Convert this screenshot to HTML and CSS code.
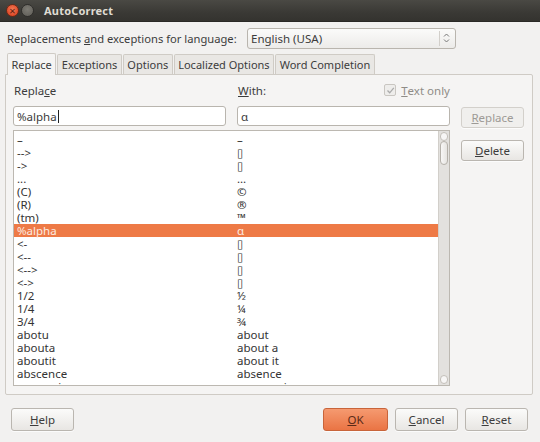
FILE: index.html
```html
<!DOCTYPE html>
<html lang="en">
<head>
  <meta charset="UTF-8">
  <title>AutoCorrect</title>
  <link rel="stylesheet" href="styles.css">
</head>
<body>
  <div class="titlebar">
    <span class="wbtn close">×</span>
    <span class="wbtn mini"></span>
    <span class="title">AutoCorrect</span>
  </div>

  <div class="dialog">
    <div class="lang-row">
      <span class="lang-label">Replacements <u>a</u>nd exceptions for language:</span>
      <div class="select">
        <span>English (USA)</span>
        <span class="spin">
          <svg width="7" height="12" viewBox="0 0 7 12"><path d="M1 4.5 L3.5 2 L6 4.5" fill="none" stroke="#777" stroke-width="1"/><path d="M1 7.5 L3.5 10 L6 7.5" fill="none" stroke="#777" stroke-width="1"/></svg>
        </span>
      </div>
    </div>

    <div class="tabs">
      <div class="tab active">Replace</div>
      <div class="tab">Exceptions</div>
      <div class="tab">Options</div>
      <div class="tab">Localized Options</div>
      <div class="tab">Word Completion</div>
    </div>

    <div class="panel">
      <div class="grid">
        <div class="head">Repla<u>c</u>e</div>
        <div class="head with"><span><u>W</u>ith:</span>
          <span class="check">
            <span class="box"><svg width="9" height="9" viewBox="0 0 9 9"><path d="M1.5 4.5 L3.7 6.8 L7.8 1.8" fill="none" stroke="#aaa" stroke-width="1.3"/></svg></span>
            <u>T</u>ext only
          </span>
        </div>
        <div></div>

        <div class="input">%alpha<span class="caret"></span></div>
        <div class="input">α</div>
        <div class="btn disabled"><u>R</u>eplace</div>

        <div class="list">
          <div class="rows" id="rows"></div>
          <div class="scroll">
            <span class="arrow up"></span>
            <span class="thumb"></span>
            <span class="arrow down"></span>
          </div>
        </div>
        <div class="side">
          <div class="btn"><u>D</u>elete</div>
        </div>
      </div>
    </div>

    <div class="footer">
      <div class="btn wide"><u>H</u>elp</div>
      <div class="spacer"></div>
      <div class="btn wide ok"><u>O</u>K</div>
      <div class="btn wide"><u>C</u>ancel</div>
      <div class="btn wide"><u>R</u>eset</div>
    </div>
  </div>

  <script>
    // replace -> with
    let entries = [
      ['–', '–'],
      ['-->', '▯'],
      ['->', '▯'],
      ['...', '…'],
      ['(C)', '©'],
      ['(R)', '®'],
      ['(tm)', '™'],
      ['%alpha', 'α'],
      ['<-', '▯'],
      ['<--', '▯'],
      ['<-->', '▯'],
      ['<->', '▯'],
      ['1/2', '½'],
      ['1/4', '¼'],
      ['3/4', '¾'],
      ['abotu', 'about'],
      ['abouta', 'about a'],
      ['aboutit', 'about it'],
      ['abscence', 'absence'],
      ['accesories', 'accessories']
    ]
    let rows = document.querySelector('#rows')
    entries.forEach(function (e) {
      let row = document.createElement('div')
      row.className = e[0] === '%alpha' ? 'row sel' : 'row'
      let a = document.createElement('span')
      a.className = 'key'
      a.textContent = e[0]
      let b = document.createElement('span')
      b.textContent = e[1]
      row.appendChild(a)
      row.appendChild(b)
      rows.appendChild(row)
    })
  </script>
</body>
</html>
```

FILE: styles.css
```css
* {
  box-sizing: border-box;
}

body {
  margin: 0;
  width: 540px;
  height: 442px;
  overflow: hidden;
  background: #f2f1f0;
  color: #3c3c3c;
  font-family: "Noto Sans", "DejaVu Sans", sans-serif;
  font-size: 11px;
}

u {
  text-decoration: underline;
  text-underline-offset: 1px;
}

.titlebar {
  height: 22px;
  display: flex;
  align-items: center;
  padding-left: 6px;
  background: linear-gradient(#4a4944, #3a3935 60%, #34332f);
  border-bottom: 1px solid #2a2926;
}

.wbtn {
  width: 13px;
  height: 13px;
  border-radius: 50%;
  margin-right: 2px;
  display: flex;
  align-items: center;
  justify-content: center;
  font-size: 11px;
  line-height: 1;
  color: #5a1d10;
}

.close {
  background: radial-gradient(circle at 50% 40%, #f47a55, #df4b2a 70%, #b8391d);
  border: 1px solid #6a2a18;
}

.mini {
  background: radial-gradient(circle at 50% 40%, #7d7b74, #5d5b55);
  border: 1px solid #2f2e2b;
}

.title {
  margin-left: 8px;
  color: #dfdbd2;
  font-weight: bold;
  font-size: 11px;
  letter-spacing: 0.2px;
}

.dialog {
  padding: 4px 7px 0 5px;
}

.lang-row {
  display: flex;
  align-items: center;
  height: 22px;
  margin-top: 1px;
  padding-left: 2px;
}

.lang-label {
  width: 240px;
  font-size: 11.2px;
}

.select {
  width: 209px;
  height: 21px;
  display: flex;
  align-items: center;
  justify-content: space-between;
  padding-left: 3px;
  border: 1px solid #b9b5ae;
  border-radius: 3px;
  background: linear-gradient(#fbfbfa, #ecebe9);
  font-size: 11.5px;
}

.spin {
  height: 15px;
  width: 14px;
  display: flex;
  align-items: center;
  justify-content: center;
  border-left: 1px solid #d2cfca;
  margin-right: 2px;
}

.tabs {
  display: flex;
  margin-top: 3px;
  padding-left: 2px;
  height: 22px;
  align-items: flex-end;
  font-size: 11px;
}

.tab {
  height: 20px;
  padding: 0 3.5px;
  display: flex;
  align-items: center;
  border: 1px solid #cfcbc5;
  border-bottom: none;
  border-radius: 2px 2px 0 0;
  background: #e9e7e4;
  margin-right: 1px;
}

.tab.active {
  height: 22px;
  background: #f5f4f3;
  position: relative;
  top: 1px;
}

.panel {
  height: 321px;
  border: 1px solid #cfcbc5;
  border-radius: 0 2px 2px 2px;
  background: #f5f4f3;
  padding: 5px 0 0 7px;
}

.grid {
  display: grid;
  grid-template-columns: 213px 213px 63px;
  grid-template-rows: 25px 24px 260px;
  column-gap: 11px;
}

.head {
  font-size: 11.5px;
  padding-left: 1px;
  padding-top: 3px;
}

.with {
  display: flex;
  justify-content: space-between;
}

.check {
  display: flex;
  align-items: flex-start;
  color: #8f8c87;
}

.box {
  width: 12px;
  height: 12px;
  border: 1px solid #c9c6c1;
  border-radius: 2px;
  background: #eeedeb;
  display: flex;
  align-items: center;
  justify-content: center;
  margin-right: 5px;
  margin-top: 1px;
}

.input {
  height: 20px;
  border: 1px solid #b9b5ae;
  border-radius: 3px;
  background: #fff;
  padding-left: 3px;
  display: flex;
  align-items: center;
  font-size: 11.5px;
  margin-top: 1px;
}

.caret {
  width: 1px;
  height: 13px;
  background: #222;
  margin-left: 1px;
}

.btn {
  height: 21px;
  border: 1px solid #bab6b0;
  border-radius: 3px;
  background: linear-gradient(#fbfbfa, #e8e6e3);
  display: flex;
  align-items: center;
  justify-content: center;
  font-size: 11.5px;
  box-shadow: 0 1px 0 rgba(255, 255, 255, 0.7);
}

.btn.disabled {
  color: #9d9a95;
  background: #f0efed;
  border-color: #d3d0cb;
  margin-top: 2px;
}

.side {
  padding-top: 11px;
}

.list {
  grid-column: 1 / 3;
  margin-top: 1px;
  height: 256px;
  border: 1px solid #bcb8b1;
  background: #fff;
  display: flex;
  overflow: hidden;
}

.rows {
  flex: 1;
  padding-top: 2px;
}

.row {
  height: 13px;
  display: flex;
  align-items: center;
  padding-left: 3px;
  font-size: 11.5px;
  line-height: 13px;
  color: #333;
}

.row .key {
  width: 220px;
}

.row.sel {
  background: #ee7a46;
  color: #fcebe1;
}

.scroll {
  width: 11px;
  background: #e3e1de;
  border-left: 1px solid #d2cfca;
  position: relative;
}

.thumb {
  position: absolute;
  left: 1px;
  top: 10px;
  width: 8px;
  height: 24px;
  border: 1px solid #b5b1aa;
  border-radius: 4px;
  background: linear-gradient(90deg, #f8f7f6, #e6e4e1);
}

.arrow {
  position: absolute;
  left: 1px;
  width: 8px;
  height: 9px;
  border: 1px solid #c3bfb9;
  border-radius: 4px;
  background: #f7f6f5;
}

.arrow.up {
  top: 1px;
}

.arrow.down {
  bottom: 1px;
}

.footer {
  display: flex;
  margin-top: 13px;
  padding: 0 5px 0 6px;
  gap: 7px;
}

.spacer {
  flex: 1;
}

.btn.wide {
  width: 63px;
  height: 23px;
}

.btn.wide.ok {
  width: 65px;
  background: linear-gradient(#f59a70, #ea7444);
  border-color: #c8643a;
  color: #5b2a17;
}
```
